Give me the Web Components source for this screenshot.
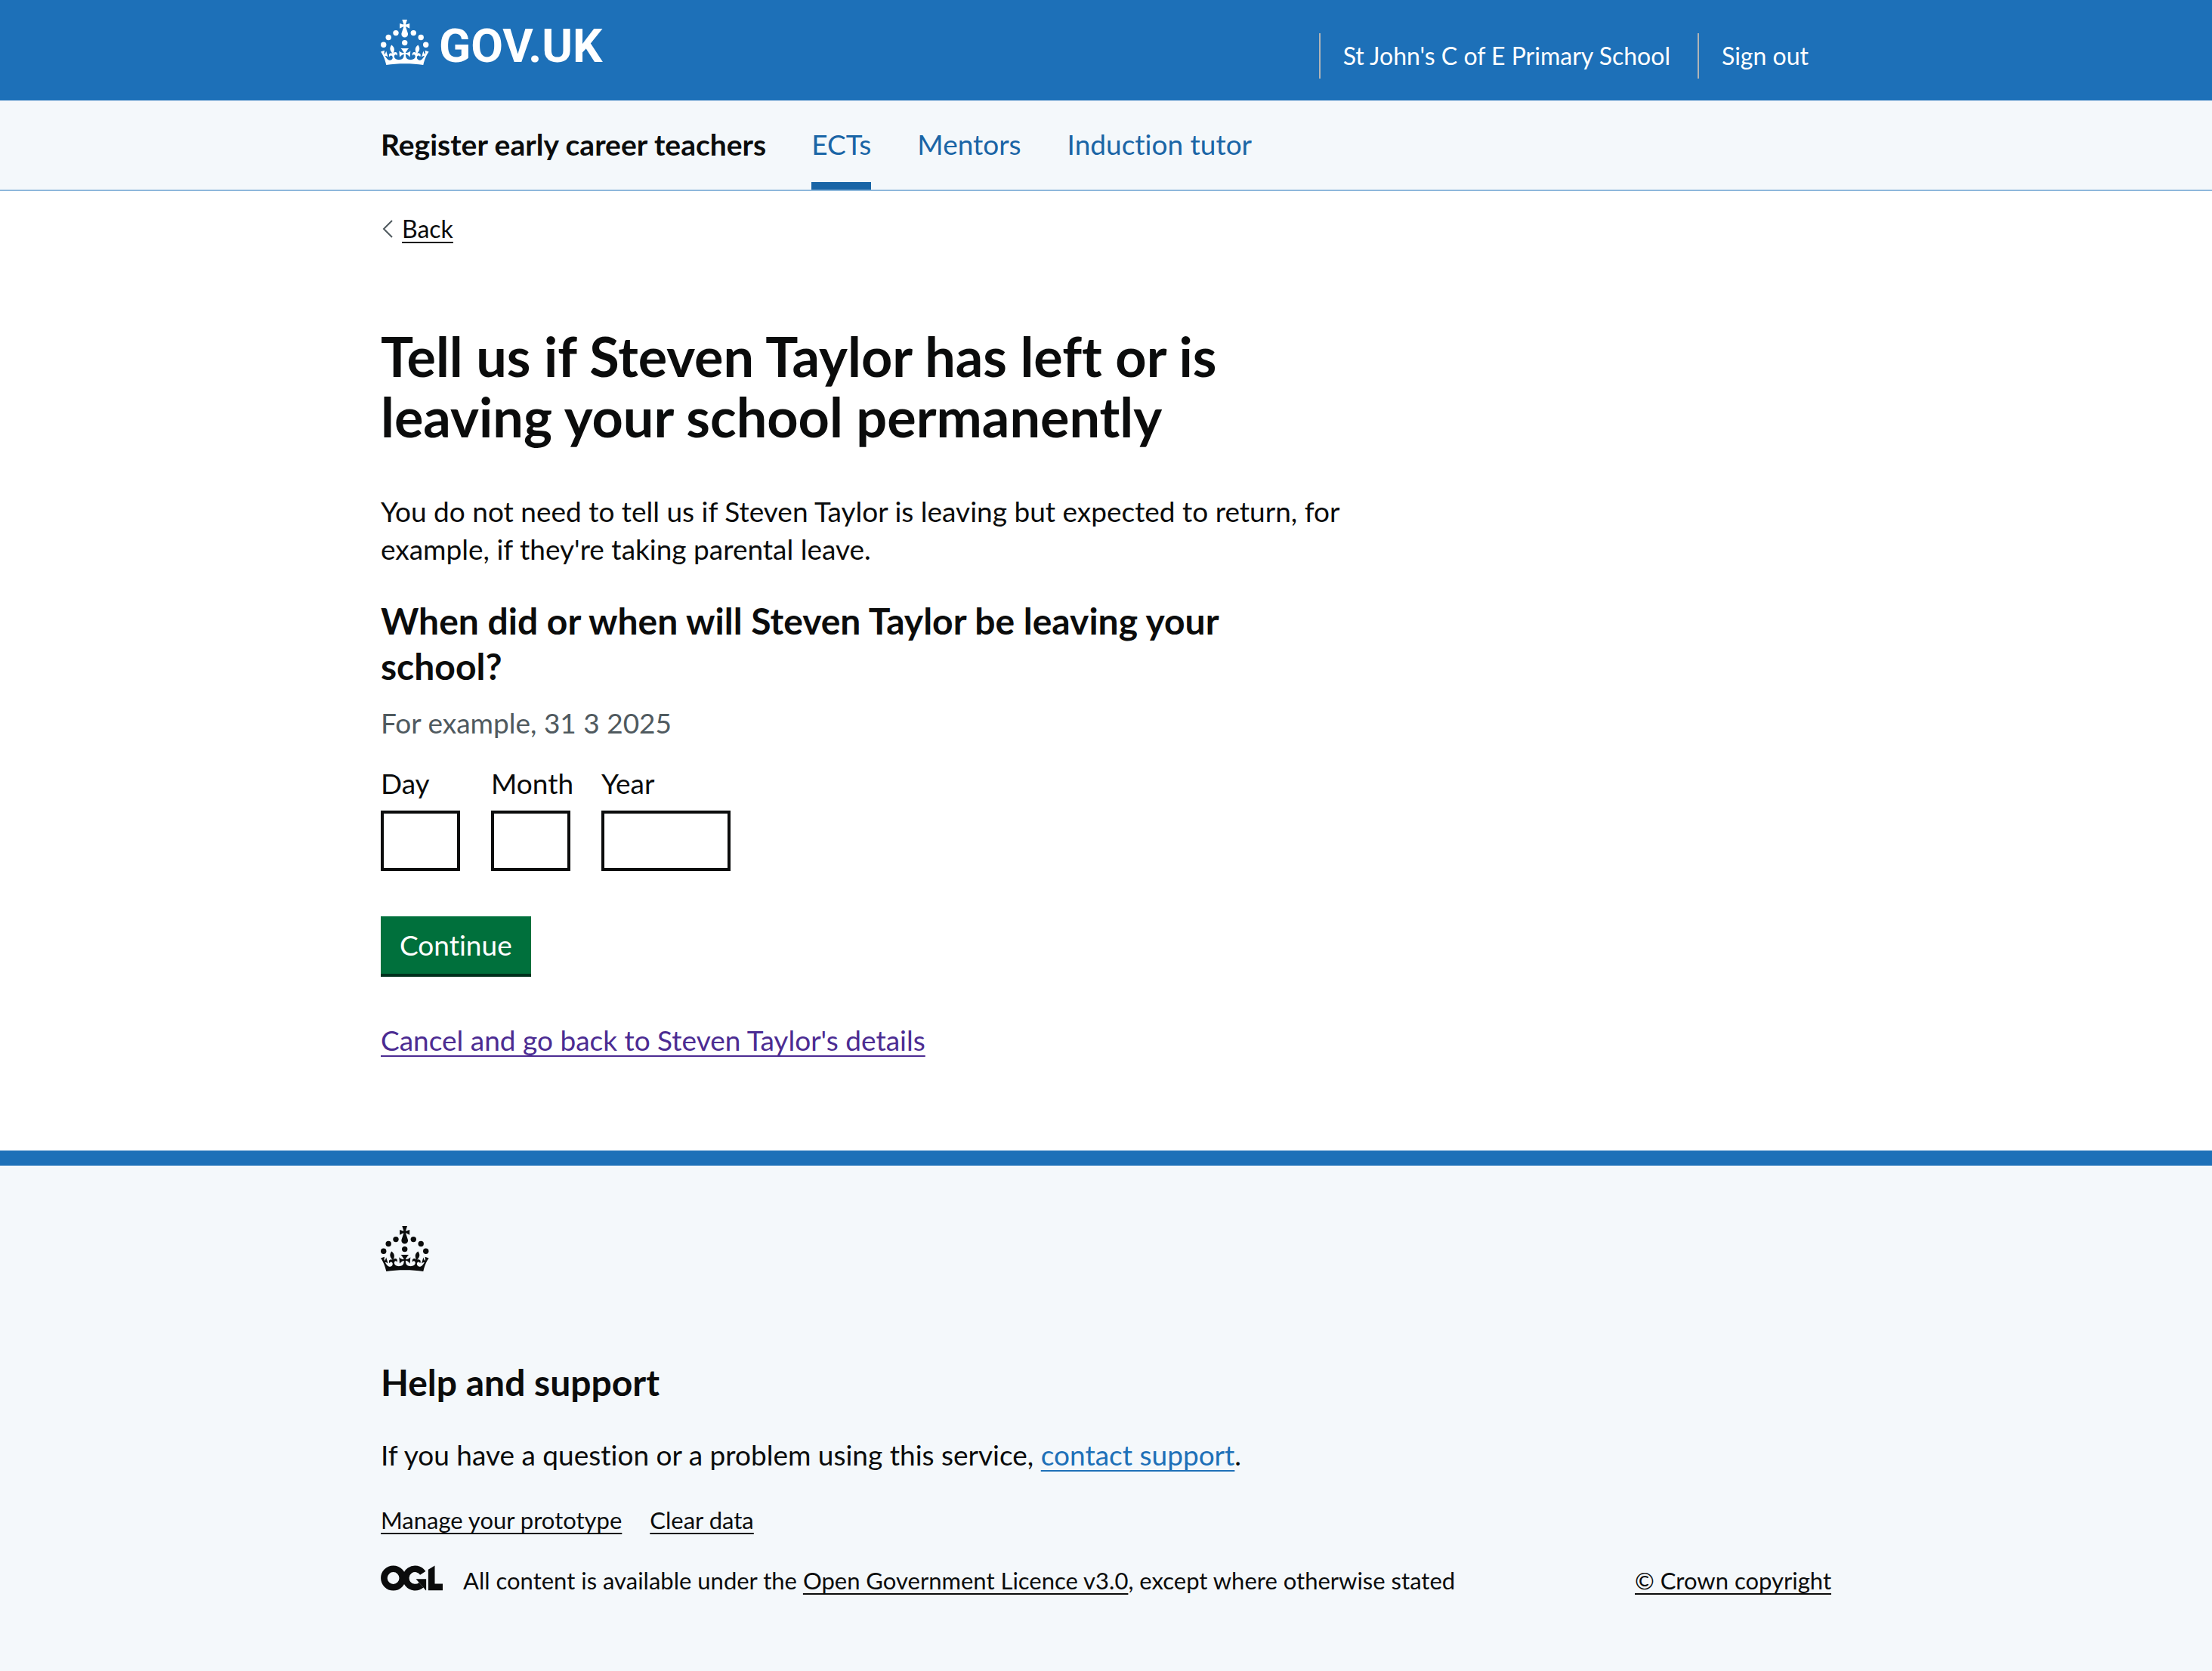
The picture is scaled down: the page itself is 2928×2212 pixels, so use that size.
<!DOCTYPE html>
<html lang="en">
<head>
<meta charset="utf-8">
<meta name="viewport" content="width=device-width, initial-scale=1">
<title>Register early career teachers</title>
<style>
  :root {
    --brand: #1d70b8;
    --link: #1a65a6;
    --tint: #f4f8fb;
    --ink: #0b0c0c;
  }
  html { background: var(--tint); }
  body {
    margin: 0;
    min-height: 100vh;
    background: #fff;
    color: var(--ink);
    font: 37px/50px Lato, "Liberation Sans", sans-serif;
    font-variant-ligatures: none;
    display: flex;
    flex-direction: column;
  }
  app-footer { flex: 1; }
</style>
</head>
<body>
<app-header>
  <a slot="item" href="#school">St John's C of E Primary School</a>
  <a slot="item" href="#sign-out">Sign out</a>
</app-header>
<service-nav name="Register early career teachers">
  <nav-link href="#ects" current>ECTs</nav-link>
  <nav-link href="#mentors">Mentors</nav-link>
  <nav-link href="#tutor">Induction tutor</nav-link>
</service-nav>
<page-main>
  <back-link slot="before" href="#back">Back</back-link>
  <page-title>Tell us if Steven Taylor has left or is leaving your school permanently</page-title>
  <body-text>You do not need to tell us if Steven Taylor is leaving but expected to return, for example, if they're taking parental leave.</body-text>
  <date-question>
    <span slot="legend">When did or when will Steven Taylor be leaving your school?</span>
    <span slot="hint">For example, 31 3 2025</span>
  </date-question>
  <action-button>Continue</action-button>
  <text-link href="#details" tone="visited">Cancel and go back to Steven Taylor's details</text-link>
</page-main>
<app-footer></app-footer>

<script>
const base = `
  *, *::before, *::after { box-sizing: border-box; }
  :host { display: block; }
  h1, h2, p, ul, fieldset, legend { margin: 0; padding: 0; border: 0; }
  ul { list-style: none; }
  .wrap { max-width: 1920px; margin: 0 auto; }
  a { color: inherit; text-decoration-thickness: 2px; text-underline-offset: 5px; text-decoration-skip-ink: none; }
`;

function define(name, css, markup) {
  customElements.define(name, class extends HTMLElement {
    constructor() {
      super();
      const root = this.attachShadow({ mode: 'open' });
      root.innerHTML = '<style>' + base + css + '</style>' +
        (typeof markup === 'function' ? markup(this) : markup);
    }
  });
}

define('crown-mark', `
  :host { width: 64px; height: 60px; flex: none; }
  svg { display: block; fill: currentColor; }
`, `
  <svg width="64" height="60" viewBox="0 0 64 60" aria-hidden="true">
    <circle cx="20" cy="17.6" r="3.7"/><circle cx="10.2" cy="23.5" r="3.7"/>
    <circle cx="3.7" cy="33.2" r="3.7"/><circle cx="31.7" cy="30.6" r="3.7"/>
    <circle cx="43.3" cy="17.6" r="3.7"/><circle cx="53.2" cy="23.5" r="3.7"/>
    <circle cx="59.7" cy="33.2" r="3.7"/>
    <path d="M33.1,9.8c.2-.1.3-.3.5-.5l4.6,2.4v-6.8l-4.6,1.5c-.1-.2-.3-.3-.5-.5l1.9-5.9h-6.7l1.9,5.9c-.2.1-.3.3-.5.5l-4.6-1.5v6.8l4.6-2.4c.1.2.3.3.5.5l-2.6,8c-.9,2.8,1.2,5.7,4.1,5.7h0c3,0,5.1-2.9,4.1-5.7l-2.6-8ZM37,37.9s-3.4,3.8-4.1,6.1c2.2,0,4.2-.5,6.4-2.8l-.7,8.5c-2-2.8-4.4-4.1-5.7-3.8.1,3.1.5,6.7,5.8,7.2,3.7.3,6.7-1.5,7-3.8.4-2.6-2-4.3-3.7-1.6-1.4-4.5,2.4-6.1,4.9-3.2-1.9-4.5-1.8-7.7,2.4-10.9,3,4,2.6,7.3-1.2,11.1,2.4-1.3,6.2,0,4,4.6-1.2-2.8-3.7-2.2-4.2.2-.3,1.7.7,3.7,3,4.2,1.9.3,4.7-.9,7-5.9-1.3,0-2.4.7-3.9,1.7l2.4-8c.6,2.3,1.4,3.7,2.2,4.5.6-1.6.5-2.8,0-5.3l5,1.8c-2.6,3.6-5.2,8.7-7.3,17.5-7.4-1.1-15.7-1.7-24.5-1.7h0c-8.8,0-17.1.6-24.5,1.7-2.1-8.9-4.7-13.9-7.3-17.5l5-1.8c-.5,2.5-.6,3.7,0,5.3.8-.8,1.6-2.3,2.2-4.5l2.4,8c-1.5-1-2.6-1.7-3.9-1.7,2.3,5,5.2,6.2,7,5.9,2.3-.4,3.3-2.4,3-4.2-.5-2.4-3-3.1-4.2-.2-2.2-4.6,1.6-6,4-4.6-3.7-3.7-4.2-7.1-1.2-11.1,4.2,3.2,4.3,6.4,2.4,10.9,2.5-2.8,6.3-1.3,4.9,3.2-1.8-2.7-4.1-1-3.7,1.6.3,2.3,3.3,4.1,7,3.8,5.4-.5,5.7-4.2,5.8-7.2-1.3-.2-3.7,1-5.7,3.8l-.7-8.5c2.2,2.3,4.2,2.7,6.4,2.8-.7-2.3-4.1-6.1-4.1-6.1h10.6Z"/>
  </svg>`);

define('app-header', `
  :host { background: var(--brand); color: #fff; }
  .wrap { display: flex; justify-content: space-between; align-items: flex-start; height: 133px; }
  .logo { display: flex; align-items: flex-start; gap: 13px; padding-top: 26px; text-decoration: none;
          font: bold 62px/70px Roboto, "Liberation Sans", sans-serif; }
  .items { display: flex; gap: 6px; padding-top: 44px; font-size: 32px; line-height: 60px; }
  ::slotted(a) { color: #fff; text-decoration: none; padding: 0 30px; border-left: 2px solid #b1b4b6; }
`, `
  <div class="wrap">
    <a class="logo" href="#home"><crown-mark></crown-mark><span>GOV.UK</span></a>
    <nav class="items"><slot name="item"></slot></nav>
  </div>`);

define('service-nav', `
  :host { background: var(--tint); border-bottom: 2px solid #8eb8dc; }
  .wrap { display: flex; gap: 60px; line-height: 116px; }
  b { font-weight: bold; font-size: 39px; }
  nav { display: flex; gap: 61px; }
`, el => `<div class="wrap"><b>${el.getAttribute('name')}</b><nav><slot></slot></nav></div>`);

define('nav-link', `
  a { display: block; height: 118px; color: var(--link); text-decoration: none; }
  :host([current]) a { border-bottom: 10px solid var(--link); }
`, el => `<a href="${el.getAttribute('href')}"><slot></slot></a>`);

define('page-main', `
  :host { padding: 30px 60px 121px; }
  .column { max-width: 1280px; }
`, `
  <div class="wrap"><slot name="before"></slot><main class="column"><slot></slot></main></div>`);

define('back-link', `
  :host { font-size: 32px; line-height: 40px; margin-bottom: 108px; }
  div { display: flex; align-items: center; gap: 12px; }
  svg { display: block; }
`, el => `
  <div><svg width="16" height="24" viewBox="0 0 16 24" fill="none" stroke="#505a5f" stroke-width="2" aria-hidden="true"><path d="M15 1 4 12 15 23"/></svg>
  <a href="${el.getAttribute('href')}"><slot></slot></a></div>`);

define('page-title', `
  h1 { font-size: 72px; line-height: 80px; font-weight: bold; margin-bottom: 61px; }
`, `<h1><slot></slot></h1>`);

define('body-text', `p { margin-bottom: 40px; }`, `<p><slot></slot></p>`);

define('date-question', `
  :host { margin-bottom: 60px; }
  legend { font-size: 48px; line-height: 60px; font-weight: bold; margin-bottom: 20px; }
  .hint { color: #505a5f; margin-bottom: 30px; }
  .fields { display: flex; gap: 41px; }
  .field { display: flex; flex-direction: column; gap: 11px; width: 105px; }
  .field.year { width: 171px; }
  input { width: 100%; height: 80px; border: 4px solid var(--ink); border-radius: 0; padding: 10px;
          font: inherit; background: #fff; }
`, `
  <fieldset aria-describedby="hint">
    <legend><slot name="legend"></slot></legend>
    <div class="hint" id="hint"><slot name="hint"></slot></div>
    <div class="fields">
      <div class="field"><label for="day">Day</label><input id="day" inputmode="numeric"></div>
      <div class="field"><label for="month">Month</label><input id="month" inputmode="numeric"></div>
      <div class="field year"><label for="year">Year</label><input id="year" inputmode="numeric"></div>
    </div>
  </fieldset>`);

define('action-button', `
  :host { margin-bottom: 59px; }
  button { display: block; border: 0; border-bottom: 4px solid #00301c; border-radius: 0; height: 80px;
           padding: 0 25px; background: #00703c; color: #fff; font: inherit; font-variant-ligatures: none; }
`, `<button type="submit"><slot></slot></button>`);

define('text-link', `
  :host { color: var(--brand); }
  :host([inline]) { display: inline; }
  :host([tone=visited]) { color: #4c2c92; }
  a { text-underline-offset: 6px; }
`, el => `<a href="${el.getAttribute('href')}"><slot></slot></a>`);

define('ogl-logo', `
  :host { flex: none; }
  svg { display: block; }
`, `
  <svg width="82" height="34" viewBox="0 0 484 196" aria-hidden="true" fill="currentColor">
    <circle cx="98" cy="98" r="72" fill="none" stroke="currentColor" stroke-width="51"/>
    <path d="M329 59A72 72 0 1 0 316 152" fill="none" stroke="currentColor" stroke-width="51"/>
    <path d="M355 194V106H275L352 194Z"/>
    <path d="M422 143V0L371 32V194H484V143Z"/>
  </svg>`);

define('app-footer', `
  :host { background: var(--tint); border-top: 20px solid var(--brand); padding: 80px 60px 60px; }
  h2 { font-size: 48px; line-height: 60px; margin: 117px 0 41px; }
  p { margin-bottom: 41px; }
  .small { font-size: 31px; line-height: 40px; display: flex; }
  .links { gap: 37px; margin-bottom: 40px; }
  .licence { align-items: flex-start; gap: 27px; }
  .copyright { margin-left: auto; }
`, `
  <footer class="wrap">
    <crown-mark></crown-mark>
    <h2>Help and support</h2>
    <p>If you have a question or a problem using this service, <text-link inline href="#support">contact support</text-link>.</p>
    <ul class="small links">
      <li><a href="#manage">Manage your prototype</a></li>
      <li><a href="#clear">Clear data</a></li>
    </ul>
    <div class="small licence">
      <ogl-logo></ogl-logo>
      <span>All content is available under the <a href="#ogl">Open Government Licence v3.0</a>, except where otherwise stated</span>
      <a class="copyright" href="#copyright">© Crown copyright</a>
    </div>
  </footer>`);
</script>
</body>
</html>
